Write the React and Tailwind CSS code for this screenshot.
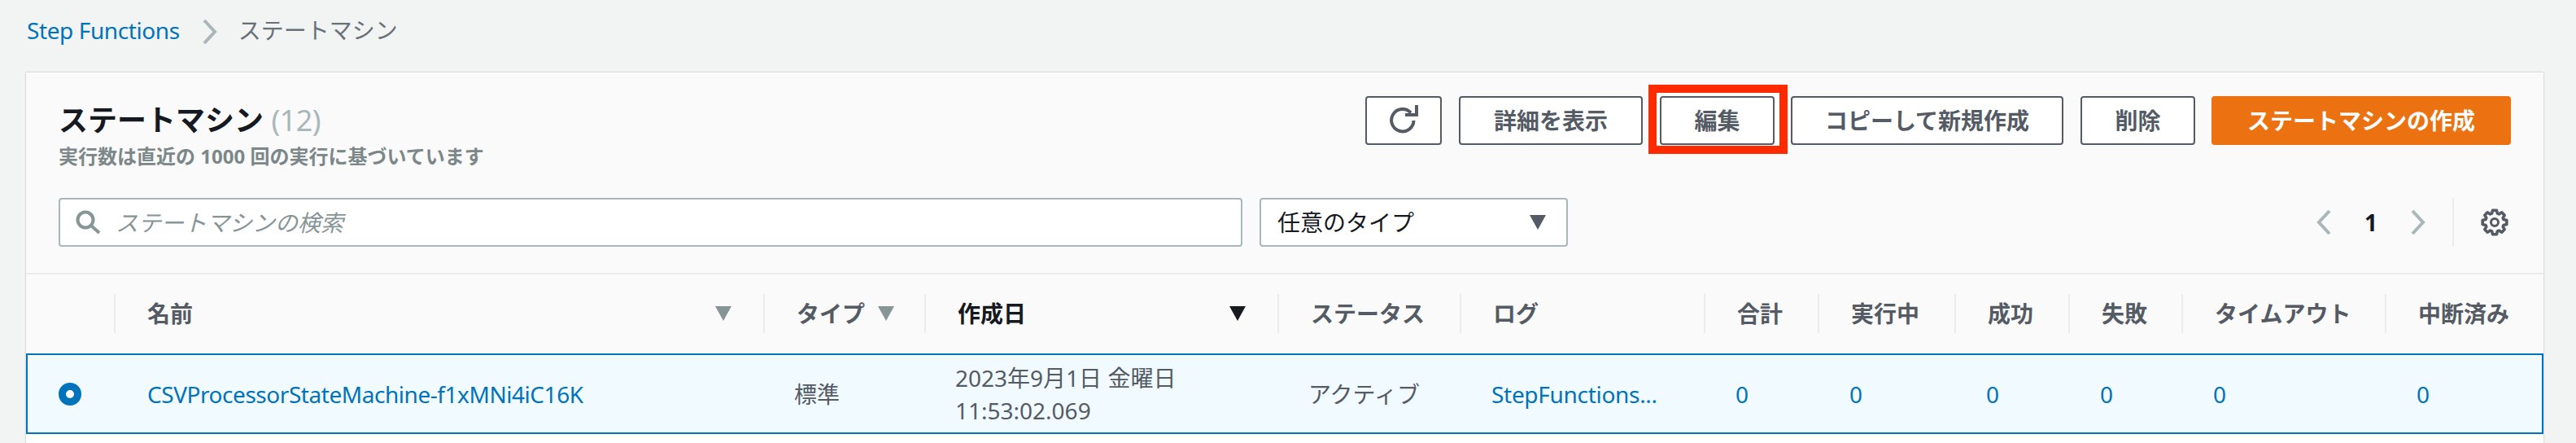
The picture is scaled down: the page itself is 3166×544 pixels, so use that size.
import { useMemo } from "react"

const font = "font-['Noto_Sans','Noto_Sans_CJK_JP',sans-serif]"

const columns = [
  { label: "名前", width: "w-[798px]", arrow: "grey", between: true },
  { label: "タイプ", width: "w-[198px]", arrow: "grey" },
  { label: "作成日", width: "w-[434px]", arrow: "dark", between: true, dark: true },
  { label: "ステータス", width: "w-[224px]" },
  { label: "ログ", width: "w-[300px]" },
  { label: "合計", width: "w-[140px]" },
  { label: "実行中", width: "w-[168px]" },
  { label: "成功", width: "w-[140px]" },
  { label: "失敗", width: "w-[139px]" },
  { label: "タイムアウト", width: "w-[250px]" },
  { label: "中断済み", width: "w-[195px]" },
]

function Caret({ className }) {
  return (
    <svg viewBox="0 0 20 18" className={className} fill="currentColor">
      <path d="M0 0h20L10 18z" />
    </svg>
  )
}

function Chevron({ left, className }) {
  return (
    <svg viewBox="0 0 18 30" className={className} fill="none" stroke="currentColor" strokeWidth="4">
      <path d={left ? "M16 1L3 15l13 14" : "M2 1l13 14L2 29"} />
    </svg>
  )
}

function Gear() {
  // eight teeth, drawn around the centre of a 34 box
  const d = useMemo(() => {
    const pts = []
    for (let i = 0; i < 8; i++) {
      const a = (i * Math.PI) / 4 - Math.PI / 2
      const at = (r, off) => `${(17 + r * Math.cos(a + off)).toFixed(2)} ${(17 + r * Math.sin(a + off)).toFixed(2)}`
      pts.push(at(11.5, -0.3), at(15, -0.16), at(15, 0.16), at(11.5, 0.3))
    }
    return "M" + pts.join("L") + "z"
  }, [])
  return (
    <svg viewBox="0 0 34 34" className="ml-[33px] mr-[3px] w-[34px] h-[34px]" fill="none" stroke="#545b64" strokeWidth="3.6" strokeLinejoin="round">
      <path d={d} />
      <circle cx="17" cy="17" r="4.5" strokeWidth="3" />
    </svg>
  )
}

function OutlineButton({ children, className }) {
  return (
    <button className={`relative h-[60px] rounded-[4px] border-2 border-[#545b64] bg-white flex items-center justify-center text-[28px] font-bold text-[#545b64] ${className}`}>
      {children}
    </button>
  )
}

export default function App() {
  return (
    <div className={`h-[544px] w-[3166px] overflow-hidden bg-[#f2f3f3] ${font}`}>
      {/* breadcrumb */}
      <div className="h-[89px] pl-[33px] pt-[17px] flex items-start text-[28px] leading-[40px]">
        <span className="text-[#0073bb] tracking-[-0.4px]">Step Functions</span>
        <Chevron className="w-[18px] h-[30px] ml-[28px] mr-[26px] mt-[7px] text-[#aab7b8]" />
        <span className="text-[#687078]">ステートマシン</span>
      </div>

      {/* card */}
      <div className="ml-[32px] w-[3094px] h-[455px] bg-white shadow-[0_0_2px_rgba(0,28,36,0.3)]">
        <div className="h-[248px] bg-[#fafafa] border-b-2 border-[#eaeded] pt-[29px] px-[40px]">
          <div className="flex justify-between">
            <div className="pt-[7px]">
              <div className="text-[36px] leading-[46px] font-bold text-[#16191f]">
                ステートマシン <span className="font-normal text-[#aab7b8] tracking-[-0.5px]">(12)</span>
              </div>
              <div className="mt-[5px] text-[24px] leading-[32px] font-bold text-[#7b8789]">
                実行数は直近の 1000 回の実行に基づいています
              </div>
            </div>
            <div className="flex items-start">
              <OutlineButton className="w-[94px]">
                <svg viewBox="0 0 36 36" className="w-[36px] h-[36px] -mt-[4px]" fill="none" stroke="#545b64" strokeWidth="4">
                  <path d="M20 13h14V1" />
                  <path d="M27 10.5A13.7 13.7 0 1 0 30.5 20" />
                </svg>
              </OutlineButton>
              <OutlineButton className="w-[226px] ml-[21px]">詳細を表示</OutlineButton>
              <div className="relative ml-[21px]">
                <div className="absolute -left-[14px] -right-[16px] -top-[14px] -bottom-[11px] border-[10px] border-[#ff2a00] bg-white" />
                <OutlineButton className="w-[141px]">編集</OutlineButton>
              </div>
              <OutlineButton className="w-[335px] ml-[20px]">コピーして新規作成</OutlineButton>
              <OutlineButton className="w-[141px] ml-[21px]">削除</OutlineButton>
              <button className="h-[60px] w-[368px] ml-[20px] rounded-[4px] bg-[#ec7211] text-[28px] font-bold text-white">
                ステートマシンの作成
              </button>
            </div>
          </div>

          <div className="flex items-center mt-[35px]">
            <div className="w-[1455px] h-[60px] rounded-[4px] border-2 border-[#aab7b8] bg-white flex items-center pl-[18px]">
              <svg viewBox="0 0 32 32" className="w-[32px] h-[32px]" fill="none" stroke="#879596" strokeWidth="4">
                <circle cx="13" cy="13" r="9.5" />
                <path d="M20 20l10 9" />
              </svg>
              <span className="ml-[18px] text-[28px] italic text-[#879596]">ステートマシンの検索</span>
            </div>
            <div className="ml-[21px] w-[379px] h-[60px] rounded-[4px] border-2 border-[#aab7b8] bg-white flex items-center justify-between pl-[20px] pr-[25px] text-[28px] text-[#16191f]">
              <span>任意のタイプ</span>
              <Caret className="w-[20px] h-[18px] text-[#545b64]" />
            </div>
            <div className="ml-auto flex items-center h-[60px]">
              <Chevron left className="w-[18px] h-[30px] text-[#aab7b8]" />
              <span className="mx-[41px] text-[28px] font-bold text-[#16191f]">1</span>
              <Chevron className="w-[18px] h-[30px] text-[#aab7b8]" />
              <div className="ml-[33px] h-[60px] w-[2px] bg-[#eaeded]" />
              <Gear />
            </div>
          </div>
        </div>

        {/* header row */}
        <div className="h-[97px] bg-[#fafafa] flex items-center pb-[2px] text-[28px] font-bold text-[#545b64]">
          <div className="w-[108px] shrink-0" />
          {columns.map((col) => (
            <div
              key={col.label}
              className={`${col.width} shrink-0 h-[48px] border-l-2 border-[#eaeded] pl-[39px] flex items-center ${col.between ? "justify-between pr-[39px]" : ""}`}
            >
              <span className={col.dark ? "text-[#16191f]" : ""}>{col.label}</span>
              {col.arrow === "grey" && <Caret className={`w-[20px] h-[18px] text-[#879596] ${col.between ? "" : "ml-[16px]"}`} />}
              {col.arrow === "dark" && <Caret className="w-[20px] h-[18px] text-[#16191f]" />}
            </div>
          ))}
        </div>

        {/* selected row */}
        <div className="h-[99px] border-2 border-[#0073bb] bg-[#f1faff] flex items-center text-[28px] text-[#545b64]">
          <div className="w-[106px] shrink-0 pl-[38px]">
            <div className="w-[28px] h-[28px] rounded-full border-[9px] border-[#0073bb] bg-white" />
          </div>
          <div className="w-[798px] shrink-0 pl-[41px] text-[#0073bb] tracking-[-0.45px]">CSVProcessorStateMachine-f1xMNi4iC16K</div>
          <div className="w-[198px] shrink-0 pl-[38px]">標準</div>
          <div className="w-[434px] shrink-0 pl-[38px] leading-[40px]">
            2023年9月1日 金曜日
            <br />
            11:53:02.069
          </div>
          <div className="w-[224px] shrink-0 pl-[38px]">アクティブ</div>
          <div className="w-[300px] shrink-0 pl-[39px] text-[#0073bb] tracking-[-0.3px]">StepFunctions...</div>
          <div className="w-[140px] shrink-0 pl-[39px] text-[#0073bb]">0</div>
          <div className="w-[168px] shrink-0 pl-[39px] text-[#0073bb]">0</div>
          <div className="w-[140px] shrink-0 pl-[39px] text-[#0073bb]">0</div>
          <div className="w-[139px] shrink-0 pl-[39px] text-[#0073bb]">0</div>
          <div className="w-[250px] shrink-0 pl-[39px] text-[#0073bb]">0</div>
          <div className="shrink-0 pl-[39px] text-[#0073bb]">0</div>
        </div>
      </div>
    </div>
  )
}
